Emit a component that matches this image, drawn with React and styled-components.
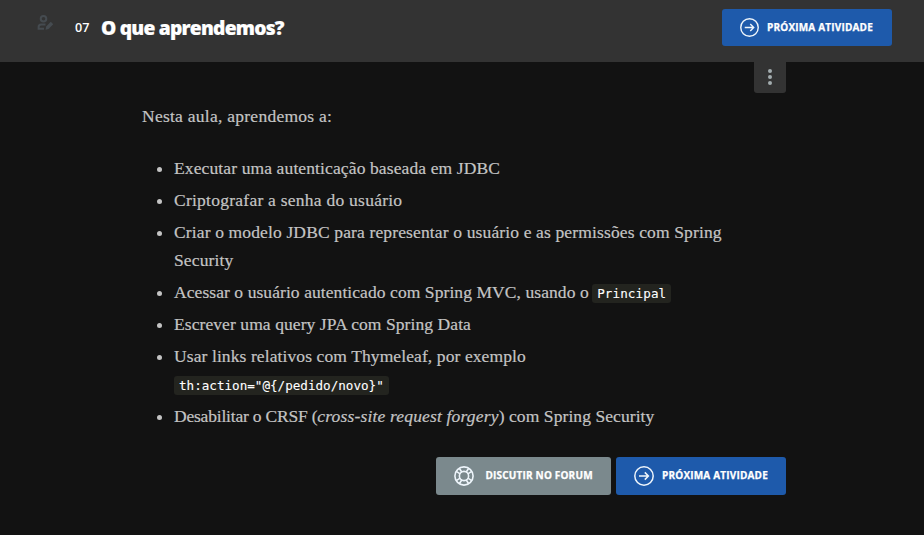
import React from "react";
import styled, { createGlobalStyle } from "styled-components";

const Global = createGlobalStyle`
  * { box-sizing: border-box; }
  body { margin: 0; background: #121212; }
`;

const Page = styled.div`
  height: 535px;
  overflow: hidden;
  background: #121212;
  font-family: "Open Sans", sans-serif;
  color: #c4c4c4;
`;

const Header = styled.header`
  display: flex;
  align-items: flex-start;
  height: 62px;
  padding: 9px 32px 0 37px;
  background: #333;
`;

const EditIcon = styled.svg`
  flex: none;
  width: 17px;
  height: 17px;
  margin: 5px 21px 0 0;
`;

const Order = styled.span`
  width: 26px;
  font-size: 12.6px;
  font-weight: 600;
  line-height: 38px;
  color: #fff;
`;

const Title = styled.h1`
  flex: 1;
  margin: 0;
  font-size: 19.2px;
  font-weight: 800;
  line-height: 38px;
  letter-spacing: -0.75px;
  -webkit-text-stroke: 0.2px #fff;
  color: #fff;
`;

const Button = styled.button`
  display: flex;
  align-items: center;
  gap: ${(p) => p.$gap || 8}px;
  width: ${(p) => p.$width || 170}px;
  height: ${(p) => p.$height || 38}px;
  padding: 0 0 0 18px;
  border: 0;
  border-radius: 3px;
  background: ${(p) => p.$color || "#1e5aab"};
  color: #fff;
  font: 700 10px/20px "Open Sans", sans-serif;
  white-space: nowrap;
`;

const ButtonIcon = styled.svg`
  flex: none;
  width: ${(p) => p.$size || 20}px;
  height: ${(p) => p.$size || 20}px;
  fill: none;
  stroke: #eef5fb;
`;

const Label = styled.span`
  padding-bottom: 2px;
  letter-spacing: 0.18px;
  -webkit-text-stroke: 0.25px #fff;
`;

const Content = styled.main`
  width: 644px;
  margin-left: 142px;
`;

const Menu = styled.button`
  display: flex;
  flex-direction: column;
  align-items: center;
  justify-content: center;
  gap: 2px;
  width: 32px;
  height: 31px;
  margin: 0 0 0 612px;
  padding: 0 0 2px;
  border: 0;
  border-radius: 0 0 3px 3px;
  background: #333;
`;

const Dot = styled.span`
  width: 4px;
  height: 4px;
  border-radius: 50%;
  background: #a3adaf;
`;

const Article = styled.article`
  font: 17.5px/28px "Liberation Serif", serif;
  -webkit-text-stroke: 0.2px #c4c4c4;
`;

const Intro = styled.p`
  margin: 9px 0 24px;
`;

const List = styled.ul`
  display: flex;
  flex-direction: column;
  gap: 4px;
  margin: 0;
  padding: 0 0 0 32px;
`;

const Item = styled.li`
  white-space: nowrap;
`;

const Line = styled.div`
  height: 28px;
`;

const Run = styled.span`
  letter-spacing: ${(p) => p.$ls || 0}px;
`;

const Code = styled.code`
  margin-left: ${(p) => p.$ml || 0}px;
  padding: 2px 5px;
  border-radius: 3px;
  background: #23241f;
  color: #fff;
  font: 12.6px/15px "DejaVu Sans Mono", monospace;
  letter-spacing: ${(p) => p.$ls || 0}px;
  -webkit-text-stroke: 0.1px #fff;
`;

const Actions = styled.div`
  display: flex;
  justify-content: flex-end;
  gap: 5px;
  margin-top: 27px;
`;

function ArrowIcon({ size }) {
  return (
    <ButtonIcon viewBox="0 0 20 20" $size={size} strokeWidth="1.5">
      <circle cx="10" cy="10" r="9.2" />
      <path d="M5 10h9.2M10.8 6.4l3.6 3.6-3.6 3.6" />
    </ButtonIcon>
  );
}

function BuoyIcon() {
  return (
    <ButtonIcon viewBox="0 0 20 20" strokeWidth="1.6">
      <circle cx="10" cy="10" r="9.1" />
      <circle cx="10" cy="10" r="4.6" />
      <path d="M5.3 2.2l2.6 4M2.2 5.3l4 2.6M14.7 2.2l-2.6 4M17.8 5.3l-4 2.6M5.3 17.8l2.6-4M2.2 14.7l4-2.6M14.7 17.8l-2.6-4M17.8 14.7l-4-2.6" />
    </ButtonIcon>
  );
}

export default function App() {
  return (
    <Page>
      <Global />
      <Header>
        <EditIcon viewBox="0 0 17 17" fill="none" stroke="#454b50" strokeWidth="2">
          <circle cx="6.5" cy="4.8" r="2.8" />
          <path d="M8.5 10.5H4.2Q1.6 10.5 1.6 13v1.8H7" />
          <path d="M8.5 15.8l.7-3.4 4.6-4.6 2.4 2.4-4.6 4.8z" fill="#454b50" stroke="none" />
        </EditIcon>
        <Order>07</Order>
        <Title>O que aprendemos?</Title>
        <Button $height={37}>
          <ArrowIcon size={19} />
          <Label>PRÓXIMA ATIVIDADE</Label>
        </Button>
      </Header>
      <Content>
        <Menu aria-label="Menu">
          <Dot />
          <Dot />
          <Dot />
        </Menu>
        <Article>
          <Intro><Run $ls={0.26}>Nesta aula, aprendemos a:</Run></Intro>
          <List>
            <Item><Run $ls={0.12}>Executar uma autenticação baseada em JDBC</Run></Item>
            <Item><Run $ls={0.25}>Criptografar a senha do usuário</Run></Item>
            <Item>
              <Line><Run $ls={0.14}>Criar o modelo JDBC para representar o usuário e as permissões com Spring</Run></Line>
              <Line><Run $ls={0.12}>Security</Run></Line>
            </Item>
            <Item>
              <Run $ls={0.075}>Acessar o usuário autenticado com Spring MVC, usando o</Run>{" "}
              <Code $ml={-1} $ls={0.1}>Principal</Code>
            </Item>
            <Item><Run $ls={0.08}>Escrever uma query JPA com Spring Data</Run></Item>
            <Item>
              <Line><Run $ls={0.1}>Usar links relativos com Thymeleaf, por exemplo</Run></Line>
              <Line><Code>{'th:action="@{/pedido/novo}"'}</Code></Line>
            </Item>
            <Item>
              <Run $ls={-0.2}>Desabilitar o CRSF (</Run>
              <em><Run $ls={0.17}>cross-site request forgery</Run></em>
              <Run $ls={0.08}>) com Spring Security</Run>
            </Item>
          </List>
        </Article>
        <Actions>
          <Button $color="#7b898d" $width={175} $gap={11.5}>
            <BuoyIcon />
            <Label>DISCUTIR NO FORUM</Label>
          </Button>
          <Button>
            <ArrowIcon />
            <Label>PRÓXIMA ATIVIDADE</Label>
          </Button>
        </Actions>
      </Content>
    </Page>
  );
}
